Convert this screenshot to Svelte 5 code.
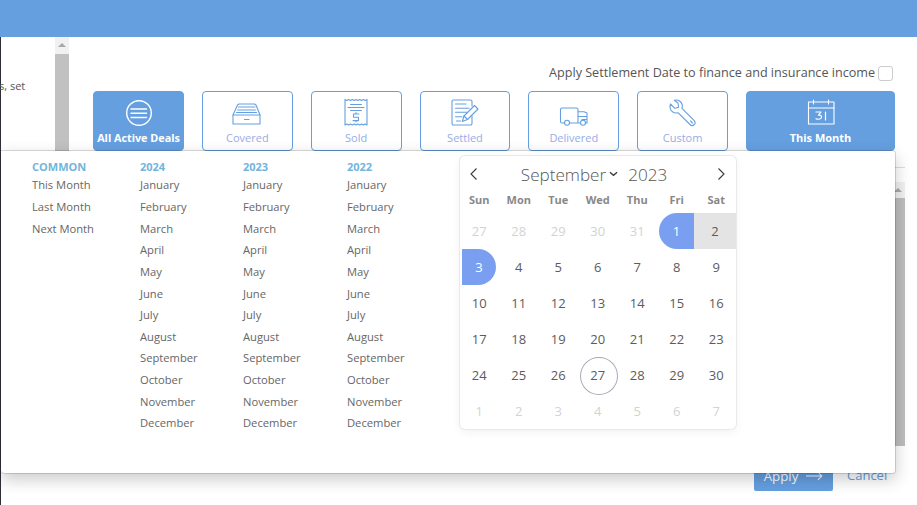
<script>
  const months = ['January','February','March','April','May','June','July','August','September','October','November','December'];
  const years = ['2024','2023','2022'];
  const commons = ['This Month','Last Month','Next Month'];
  const weekdays = ['Sun','Mon','Tue','Wed','Thu','Fri','Sat'];
  const prev = [27,28,29,30,31];
  const next = [1,2,3,4,5,6,7];
  const days = Array.from({length:30},(_,i)=>i+1);
  const cells = [
    ...prev.map(d=>({d,c:'off'})),
    ...days.map(d=>({d,c:d===1?'start':d===2?'range':d===3?'end':d===27?'today':''})),
    ...next.map(d=>({d,c:'off'}))
  ];
  const filters = [
    {n:'All Active Deals',k:'all',on:true},
    {n:'Covered',k:'covered'},
    {n:'Sold',k:'sold'},
    {n:'Settled',k:'settled'},
    {n:'Delivered',k:'delivered'},
    {n:'Custom',k:'custom'},
    {n:'This Month',k:'month',on:true},
  ];
</script>

<div class="page">
  <header class="top"></header>
  <div class="rail"></div>
  <div class="snippet">s, set</div>
  <div class="scroll"><div class="arrow"></div></div>
  <div class="hline"></div>
  <div class="scroll2"><div class="arrow2"></div></div>

  <main class="main">
    <label class="settle">Apply Settlement Date to finance and insurance income <span class="box"></span></label>
    <div class="filters">
      {#each filters as f}
        <button class="filter" class:on={f.on}>
          <svg class="ico" viewBox="0 0 32 32" fill="none" stroke="currentColor" stroke-width="1.1" stroke-linecap="round" stroke-linejoin="round">
            {#if f.k==='all'}
              <circle cx="16" cy="16" r="12.300" stroke-width="1.400"/>
              <path d="M8 12h15.500M8 16.200h15.500M8 20.500h15.500" stroke-width="1.400"/>
            {:else if f.k==='covered'}
              <path d="M8 7h15.500l1.500 1 4 10v9H2v-9l4.500-10z"/>
              <path d="M2 18h27M7.500 10h16.500M6.500 13h18M5.500 15.500h20M13.500 22.500h4.500" />
            {:else if f.k==='sold'}
              <path d="M5 2.500l1.900 1 1.800-1 1.800 1 1.900-1 1.800 1 1.800-1 1.800 1 1.900-1 1.800 1 1.800-1 1.800 1 1.900-1v25.500l-1.900-1-1.800 1-1.800-1-1.800 1-1.900-1-1.800 1-1.800-1-1.800 1-1.900-1-1.800 1-1.800-1-1.900 1z"/>
              <path d="M10.500 7.500h11M8 10.500h16M10.500 13.500h11"/>
              <path d="M19 17h-5.500v3.300h5v3.300H13M16 15.500v1.500M16 23.600v1.400"/>
            {:else if f.k==='settled'}
              <path d="M23 9V4.500A1.500 1.500 0 0 0 21.500 3h-17A1.500 1.500 0 0 0 3 4.500v22A1.500 1.500 0 0 0 4.500 28h17a1.500 1.500 0 0 0 1.500-1.500V19"/>
              <path d="M6.500 7h10.500M6.500 11.300h13.500M6.500 15.300h11.500M6.500 19.700h6.500M7.500 24h4"/>
              <path d="M13.300 24.500l1.700-5.500L25.500 8.500l3.500 3.500-10.500 10.500z"/>
              <path d="M15 19l3.500 3.500"/>
            {:else if f.k==='delivered'}
              <path d="M20 26V12.500A1.500 1.500 0 0 0 18.500 11h-14.500A1.500 1.500 0 0 0 2.500 12.500v12A1.500 1.500 0 0 0 4 26h2.500M11.500 26h11"/>
              <path d="M20 14.700h6l3 1.300v10h-1.500M20 19.500h9M24 22.500h5"/>
              <circle cx="9" cy="25.700" r="2.500"/>
              <circle cx="25" cy="25.700" r="2.500"/>
            {:else if f.k==='custom'}
              <path d="M3.500 7l4.300 4.300 3.800-1-.6-4.300L7.300 3.300c4.800-1.500 9.200 2.700 7.700 8L26.800 23.200c2 2 1.500 3.400.5 4.300s-2.900 1.500-4.300 0L11 15.700C5.700 17.100 1.600 12.300 3.500 7z"/>
              <path d="M23.500 24l2 2"/>
            {:else}
              <rect x="3.500" y="5" width="25.500" height="22"/>
              <path d="M3.500 11h25.500M8.500 3v4M23.500 3v4"/>
              <path d="M11 15h5l-2.500 3.200c2.500-.3 3.300.8 3 2.200s-3 2.500-5.500 1.300M20.500 15v8" stroke-width="1.200"/>
            {/if}
          </svg>
          <span class="lbl">{f.n}</span>
        </button>
      {/each}
    </div>
  </main>

  <section class="panel">
    <div class="lists">
      <ul class="col c0">
        <li class="head">COMMON</li>
        {#each commons as c}<li>{c}</li>{/each}
      </ul>
      {#each years as y, i}
        <ul class="col" class:c1={i===0} class:c2={i===1} class:c3={i===2}>
          <li class="head">{y}</li>
          {#each months as m}<li>{m}</li>{/each}
        </ul>
      {/each}
    </div>
    <div class="cal">
      <div class="calhead">
        <svg class="nav" viewBox="0 0 12 16" fill="none" stroke="#3c3c3c" stroke-width="1.100"><path d="M8.500 2.500L3 8l5.500 5.500"/></svg>
        <div class="title">
          <span class="m">September</span>
          <svg class="caret" viewBox="0 0 10 6" fill="none" stroke="#3c3c3c" stroke-width="1.500"><path d="M1 1l4 3.500L9 1"/></svg>
          <span class="y">2023</span>
        </div>
        <svg class="nav" viewBox="0 0 12 16" fill="none" stroke="#3c3c3c" stroke-width="1.100"><path d="M3.500 2.500L9 8l-5.500 5.500"/></svg>
      </div>
      <div class="wk">{#each weekdays as w}<span>{w}</span>{/each}</div>
      <div class="grid">
        {#each cells as c}
          <span class="day {c.c}">{c.d}</span>
        {/each}
      </div>
    </div>
  </section>

  <div class="apply">Apply <svg viewBox="0 0 20 10" fill="none" stroke="#fff" stroke-width="1.200"><path d="M0 5h18.500M14 .5L18.500 5 14 9.500"/></svg></div>
  <div class="cancel">Cancel</div>
</div>

<style>
  :global(body) { margin: 0; background: #fff; overflow: hidden; }
  * { box-sizing: border-box; }
  .page { position: relative; width: 917px; height: 505px; overflow: hidden; background: #fff; font-family: "Open Sans", sans-serif; color: #666; }
  .top { height: 37px; background: #659fe0; }
  .rail { position: absolute; left: 0; top: 37px; bottom: 0; width: 1px; background: #2c2f36; }
  .snippet { position: absolute; left: -1px; top: 78px; font-size: 11px; line-height: 15px; color: #555; }
  .scroll { position: absolute; left: 55px; top: 37px; width: 14px; height: 114px; background: #c1c1c1; }
  .arrow { height: 17px; background: #f1f1f1; position: relative; }
  .arrow::after { content: ""; position: absolute; left: 3px; top: 6px; border: 4px solid transparent; border-top: 0; border-bottom: 4px solid #a8a8a8; }
  .hline { position: absolute; left: 740px; top: 167px; width: 165px; height: 1px; background: #ddd; }
  .scroll2 { position: absolute; left: 891px; top: 182px; width: 14px; height: 264px; background: #bdbdbd; }
  .arrow2 { height: 16px; background: #f1f1f1; position: relative; }
  .arrow2::after { content: ""; position: absolute; left: 3px; top: 6px; border: 4px solid transparent; border-top: 0; border-bottom: 4px solid #a8a8a8; }

  .main { display: flex; flex-direction: column; align-items: flex-end; padding: 27px 24px 0 0; }
  .settle { display: flex; align-items: center; gap: 3px; font-size: 12.600px; line-height: 18px; color: #555; height: 18px; }
  .box { width: 15px; height: 15px; border: 1px solid #ccc; border-radius: 3px; background: #fff; }
  .filters { display: flex; gap: 18.030px; margin: 9px -2px 0 0; }
  .filter { width: 90.800px; height: 60px; margin: 0; padding: 5px 0 0; background: #fff; border: 1px solid #659fe0; border-radius: 4px; color: #659fe0; display: flex; flex-direction: column; align-items: center; font-family: inherit; }
  .filter.on { background: #659fe0; color: #fff; }
  .ico { width: 32px; height: 32px; display: block; flex: none; }
  .lbl { font-size: 11px; line-height: 15px; margin-top: 0.500px; color: #98ace8; white-space: nowrap; }
  .filter.on .lbl { color: #fff; font-weight: 700; font-size: 10.800px; }
  .filter:last-child { width: 149px; }
  .filter:last-child .lbl { font-size: 11px; }

  .panel { position: absolute; left: 1px; top: 150px; width: 895px; height: 324px; background: #fff; background-clip: padding-box; border: 1px solid rgba(0,0,0,.14); border-left: 0; border-radius: 0 4px 4px 4px; box-shadow: 0 6px 16px rgba(0,0,0,.2); display: flex; z-index: 2; }
  .lists { position: relative; width: 458.500px; flex: none; }
  .col { position: absolute; top: 8.400px; margin: 0; padding: 0; list-style: none; font-size: 11.200px; color: #666; }
  .c0 { left: 31px; } .c1 { left: 139px; } .c2 { left: 242px; } .c3 { left: 346px; }
  .col li { height: 21.640px; line-height: 15px; white-space: nowrap; }
  .col .head { height: 18px; color: #72b5dc; font-weight: 700; font-size: 11px; }

  .cal { width: 276.500px; height: 273px; margin: 5px 0 0 0; border-radius: 5px; background: #fff; box-shadow: 0 0 0 1px #e9e9e9, 0 3px 10px rgba(0,0,0,.06); overflow: hidden; }
  .calhead { display: flex; align-items: center; justify-content: space-between; height: 36px; padding: 0 9.250px 0 8.750px; }
  .nav { width: 12px; height: 16px; flex: none; }
  .title { display: flex; align-items: center; color: #555; font-size: 17.100px; font-weight: 300; margin-right: 7px; }
  .caret { width: 9px; height: 6px; margin: 0 10px 0 3px; }
  .wk { display: grid; grid-template-columns: repeat(7, 39.500px); font-size: 11px; font-weight: 700; color: #888; text-align: center; line-height: 16px; height: 16px; }
  .grid { display: grid; grid-template-columns: repeat(7, 39.500px); grid-auto-rows: 36px; margin-top: 5px; }
  .day { display: flex; align-items: center; justify-content: center; font-size: 13px; color: #5c5c5c; position: relative; }
  .off { color: #d3d3d3; }
  .start { background: #7a9ff0; color: #fff; border-radius: 18px 0 0 18px; margin: 0 2.500px 0 2px; }
  .range { background: #e4e4e4; margin-left: -2.500px; }
  .end { background: #7a9ff0; color: #fff; border-radius: 0 18px 18px 0; margin: 0 3px 0 2.500px; }
  .today::before { content: ""; position: absolute; left: 2px; top: 0; width: 35.500px; height: 36px; border: 1px solid #a7abb8; border-radius: 50%; }

  .apply { position: absolute; left: 754px; top: 461px; width: 79px; height: 30px; padding-bottom: 1px; background: #659fe0; color: #fff; font-size: 13.300px; display: flex; align-items: center; justify-content: center; gap: 8px; border-radius: 2px; }
  .apply svg { width: 17px; height: 10px; }
  .cancel { position: absolute; left: 847px; top: 466px; font-size: 13px; line-height: 18px; color: #659fe0; }
</style>
